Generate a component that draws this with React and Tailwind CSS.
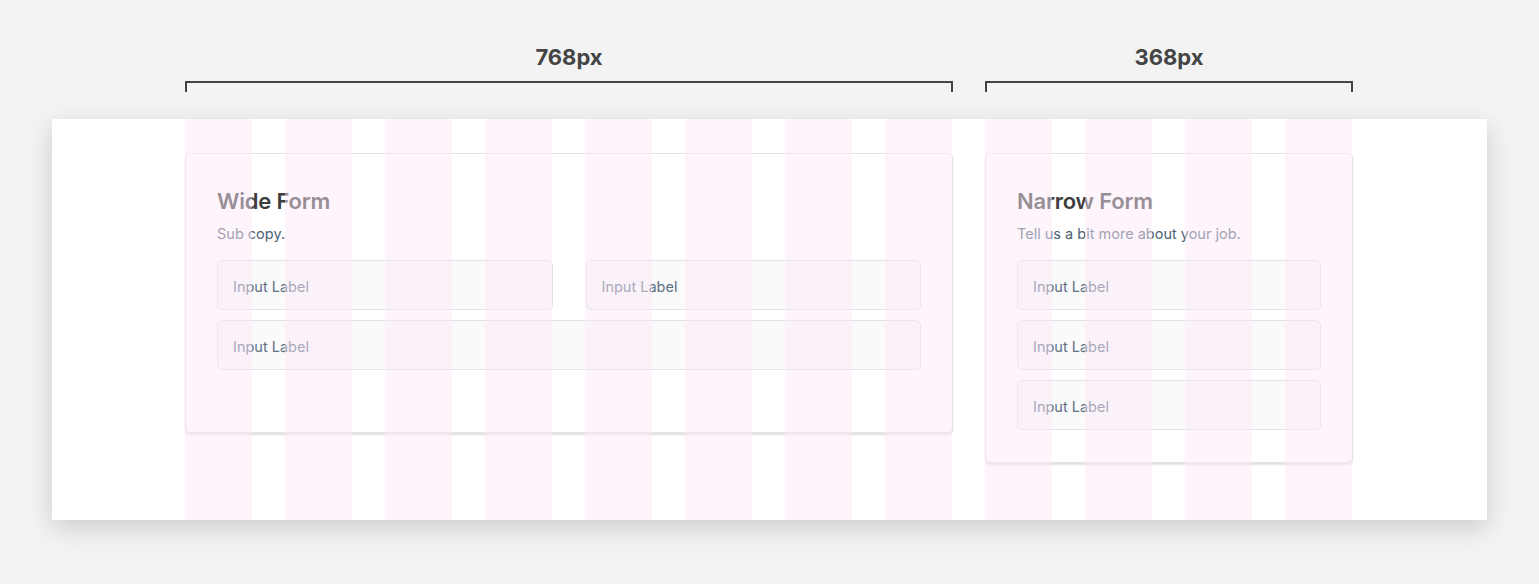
export default function App() {
  const wideCols = [0, 1, 2, 3, 4, 5, 6, 7];
  const narrowCols = [0, 1, 2, 3];

  return (
    <div className="min-h-screen w-full bg-[#f3f3f3] pt-[41px]" style={{ fontFamily: "Inter, 'Liberation Sans', sans-serif" }}>
      {/* width markers */}
      <div className="ml-[185px] flex gap-[32px]">
        <Marker label="768px" width="w-[768px]" />
        <Marker label="368px" width="w-[368px]" />
      </div>

      {/* artboard */}
      <div className="mx-[52px] mt-[27px] h-[401px] bg-white shadow-[0_8px_24px_rgba(0,0,0,0.16)] relative">
        <div className="flex gap-[32px] pl-[133px] pt-[34px]">
          <div className="w-[768px]">
            <Card title="Wide Form" sub="Sub copy." className="pb-[62px]">
              <div className="flex flex-col gap-[10px]">
                <div className="grid grid-cols-2 gap-[33px]">
                  <Field />
                  <Field />
                </div>
                <Field />
              </div>
            </Card>
          </div>
          <div className="w-[368px]">
            <Card title="Narrow Form" sub="Tell us a bit more about your job." className="pb-[32px]">
              <div className="flex flex-col gap-[10px]">
                <Field />
                <Field />
                <Field />
              </div>
            </Card>
          </div>
        </div>

        {/* column grid overlay */}
        <div className="absolute inset-0 flex gap-[32px] pl-[133px] pointer-events-none">
          <div className="w-[768px] flex gap-[33px]">
            {wideCols.map((i) => (
              <div key={i} className="w-[67px] h-full bg-[rgba(250,232,249,0.48)]" />
            ))}
          </div>
          <div className="w-[368px] flex gap-[33px]">
            {narrowCols.map((i) => (
              <div key={i} className="w-[67px] h-full bg-[rgba(250,232,249,0.48)]" />
            ))}
          </div>
        </div>
      </div>
    </div>
  );
}

function Marker({ label, width }) {
  return (
    <div className={`${width} flex flex-col items-center`}>
      <div className="text-[22px] font-bold leading-[32px] text-[#444]">{label}</div>
      <div className="mt-[8px] h-[11px] w-full border-t-2 border-l-2 border-r-2 border-[#444]" />
    </div>
  );
}

function Card({ title, sub, className, children }) {
  return (
    <div className={`rounded-[5px] border border-[#e4e4e4] bg-white px-[31px] pt-[32px] shadow-[0_2px_2px_rgba(0,0,0,0.12)] ${className}`}>
      <div className="text-[22px] font-semibold leading-[30px] text-[#3d3d3d] tracking-[-0.2px]">{title}</div>
      <div className="mt-[8px] text-[14.5px] leading-[20px] text-[#4d6273]">{sub}</div>
      <div className="mt-[16px]">{children}</div>
    </div>
  );
}

function Field() {
  return (
    <div className="h-[50px] rounded-[5px] border border-[#dfe2e6] bg-[#fafafa] px-[15px] pt-[3px] flex items-center">
      <span className="text-[14.5px] text-[#5c7082]">Input Label</span>
    </div>
  );
}
